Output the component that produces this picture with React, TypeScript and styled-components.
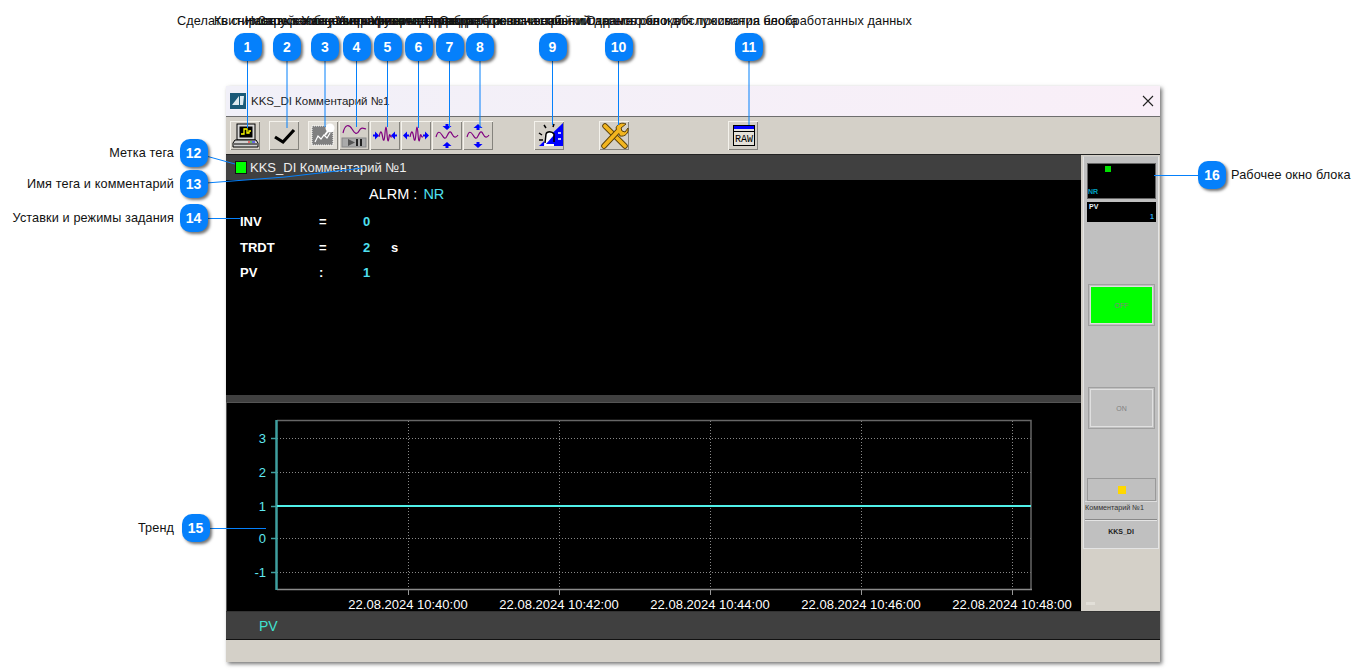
import React from "react";
import styled, { createGlobalStyle } from "styled-components";

const GlobalStyle = createGlobalStyle`
  html, body {
    margin: 0;
    padding: 0;
    background: #fff;
    overflow: hidden;
    font-family: "Liberation Sans", Arial, sans-serif;
  }
`;

const BLUE = "#0580fb";
const PURPLE = "#800080";
const ARROW = "#0000ff";

const TOP_NOTES = [
  { n: 1, x: 247.5, to: 128, text: "Сделать снимок экрана" },
  { n: 2, x: 287, to: 128, text: "Квитировать сообщение" },
  { n: 3, x: 325, to: 127, text: "Настройка шкалы графика" },
  { n: 4, x: 356.5, to: 127, text: "Запуск и пауза прокрутки тренда" },
  { n: 5, x: 387.5, to: 127, text: "Уменьшить интервал тренда" },
  { n: 6, x: 418.5, to: 128, text: "Увеличить интервал тренда" },
  { n: 7, x: 449.5, to: 128, text: "Уменьшить масштаб по оси значений" },
  { n: 8, x: 480, to: 128, text: "Увеличить масштаб по оси значений" },
  { n: 9, x: 552.5, to: 125, text: "Просмотр тревог и событий данного блока" },
  { n: 10, x: 618.5, to: 125, text: "Открыть окно настройки параметров и обслуживания блока" },
  { n: 11, x: 749, to: 125, text: "Открыть окно для просмотра необработанных данных" },
];

const SIDE_NOTES = [
  { n: 12, y: 153, x: 193.5, text: "Метка тега" },
  { n: 13, y: 184, x: 193.5, text: "Имя тега и комментарий" },
  { n: 14, y: 218, x: 193.5, text: "Уставки и режимы задания" },
  { n: 15, y: 528, x: 195.5, text: "Тренд" },
];

const SETPOINTS = [
  { name: "INV", sign: "=", value: "0", unit: "" },
  { name: "TRDT", sign: "=", value: "2", unit: "s" },
  { name: "PV", sign: ":", value: "1", unit: "" },
];

const RawText = styled.text`
  font-family: "Liberation Mono", monospace;
  font-size: 10px;
  fill: #000;
`;

const Wave = ({ d }: { d: string }) => <path d={d} fill="none" stroke={PURPLE} strokeWidth="1.2" />;
const Tri = ({ d }: { d: string }) => <path d={d} fill={ARROW} />;

const WIDE_WAVE = "M9 16c1 -5 2 -7 3 -3s1 7 2 6 1 -13 2 -13 1 14 2 14 1 -8 2 -6 .5 2 2 2";
const SMALL_WAVE = "M4 16c2 -7 4 -5 6 -2s3 5 5 1 3 -6 5 -2 4 4 6 1";

const Icons: Record<string, React.ReactNode> = {
  computer: (
    <>
      <rect x="7" y="3" width="18" height="16" fill="#d8d8d8" stroke="#000" />
      <rect x="9.500" y="5.500" width="13" height="11" fill="#000" />
      <path d="M11 13h3v-5h3v4h2v-2h2" fill="none" stroke="#ff0" strokeWidth="1.300" />
      <path d="M5 19h21l2 3v4H3v-4z" fill="#d0d0d0" stroke="#000" />
      <path d="M4 23h23" stroke="#000" />
      <path d="M18 21h2" stroke="#f00" />
      <path d="M20 21h2" stroke="#0a0" />
      <path d="M22 21h3" stroke="#00f" />
    </>
  ),
  check: <path d="M6 16l8 5L25 9" fill="none" stroke="#000" strokeWidth="3.200" />,
  chart: (
    <>
      <rect x="4" y="5" width="21" height="19" fill="#808080" stroke="#fff" strokeDasharray="1 1" />
      <path d="M7 21l3 -6 3 3 3 -4 3 3 3 -5" fill="none" stroke="#fff" strokeWidth="1.200" />
      <circle cx="22" cy="7" r="4.500" fill="#fff" />
      <path d="M17 14l3 -4" stroke="#fff" strokeWidth="2" />
    </>
  ),
  playPause: (
    <>
      <Wave d="M4 12c2 -9 6 -9 9 -4s5 6 7 2 4 -3 7 -2" />
      <rect x="3" y="17" width="24" height="9" fill="#aaa" stroke="#888" />
      <path d="M9 18l7 3.500 -7 3.500z" fill="#555" />
      <rect x="17" y="18" width="2" height="7" fill="#222" />
      <rect x="21" y="18" width="2" height="7" fill="#222" />
    </>
  ),
  zoomIn: (
    <>
      <Wave d={WIDE_WAVE} />
      <Tri d="M3 13.500h2v-3l4 4 -4 4v-3H3z" />
      <Tri d="M27 13.500h-2v-3l-4 4 4 4v-3h2z" />
    </>
  ),
  zoomOut: (
    <>
      <Wave d={WIDE_WAVE} />
      <Tri d="M8 13.500H6v-3l-4 4 4 4v-3h2z" />
      <Tri d="M22 13.500h2v-3l4 4 -4 4v-3h-2z" />
    </>
  ),
  squeeze: (
    <>
      <Wave d={SMALL_WAVE} />
      <Tri d="M13.500 3h3v2h3l-4.500 4 -4.500 -4h3z" />
      <Tri d="M13.500 27h3v-2h3l-4.500 -4 -4.500 4h3z" />
    </>
  ),
  stretch: (
    <>
      <Wave d={SMALL_WAVE} />
      <Tri d="M13.500 9h3V7h3L15 3 10.500 7h3z" />
      <Tri d="M13.500 21h3v2h3L15 27l-4.500 -4h3z" />
    </>
  ),
  alarm: (
    <>
      <path d="M29 2v23H5z" fill={ARROW} />
      <path d="M11 12h9v13h-10z" fill="#fff" />
      <path d="M20 14v9h-8z" fill={ARROW} />
      <path d="M11 22l1 -9c1 -3 6 -3 8 0v8" fill="none" stroke="#000" strokeWidth="1.500" />
      <path d="M5 12l3 2M5 19h4M10 4l2 3M20 3l-1 3" stroke="#000" strokeWidth="1.500" />
      <path d="M24 12h3M24 18h3" stroke="#fff" strokeWidth="1.500" />
    </>
  ),
  tools: (
    <>
      <path d="M6 5l20 20" stroke="#5a4008" strokeWidth="5.500" strokeLinecap="round" />
      <path d="M6 5l20 20" stroke="#f2b51f" strokeWidth="3.800" strokeLinecap="round" />
      <path d="M5 25L20 9" stroke="#5a4008" strokeWidth="5.500" strokeLinecap="round" />
      <path
        d="M17 7c1 -4 6 -6 10 -4l-5 4 1 3 3 1 3 -4c1 5 -3 9 -8 8z"
        fill="#f2b51f"
        stroke="#5a4008"
      />
      <path d="M5 25L20 9" stroke="#f2b51f" strokeWidth="3.800" strokeLinecap="round" />
    </>
  ),
  raw: (
    <>
      <rect x="5.500" y="4.500" width="21" height="20" fill="#e4e1da" stroke="#000" />
      <rect x="6" y="5" width="20" height="3" fill={ARROW} />
      <path d="M5 10.500h21" stroke="#000" />
      <RawText x="16" y="21" textAnchor="middle" textLength="18" lengthAdjust="spacingAndGlyphs">
        RAW
      </RawText>
    </>
  ),
};

const TOOLS = [
  { icon: "computer", gap: 0 },
  { icon: "check", gap: 9 },
  { icon: "chart", gap: 9, lit: true },
  { icon: "playPause", gap: 1 },
  { icon: "zoomIn", gap: 1 },
  { icon: "zoomOut", gap: 1 },
  { icon: "squeeze", gap: 1 },
  { icon: "stretch", gap: 1 },
  { icon: "alarm", gap: 41 },
  { icon: "tools", gap: 35 },
  { icon: "raw", gap: 99 },
];

const GRID_X = [408, 559, 710, 861, 1012];
const TIMES = ["10:40:00", "10:42:00", "10:44:00", "10:46:00", "10:48:00"];
const GRID_Y = [
  { y: 438, label: "3" },
  { y: 472, label: "2" },
  { y: 506, label: "1" },
  { y: 538, label: "0" },
  { y: 572, label: "-1" },
];

// chart coordinates are the page ones minus the origin of the svg
const OX = 227;
const OY = 403;

function Trend() {
  return (
    <TrendChart width={854} height={208} viewBox="0 0 854 208">
      <g transform={`translate(${-OX} ${-OY})`}>
        {GRID_Y.map((g) => (
          <g key={g.y}>
            <path d={`M277 ${g.y}.5H1031`} stroke="#888" strokeDasharray="1 2" />
            <path d={`M271 ${g.y}.5H277`} stroke="#3f9f9f" strokeWidth="1.500" />
            <AxisText x={266} y={g.y + 5} textAnchor="end">
              {g.label}
            </AxisText>
          </g>
        ))}
        {GRID_X.map((x, i) => (
          <g key={x}>
            <path d={`M${x}.5 421V589`} stroke="#888" strokeDasharray="1 2" />
            <path d={`M${x}.5 589V595`} stroke="#999" />
            <TimeText x={x} y={609} textAnchor="middle">
              22.08.2024 {TIMES[i]}
            </TimeText>
          </g>
        ))}
        <path d="M277 420.500H1031V590" fill="none" stroke="#666" strokeWidth="1.500" />
        <path d="M277 589.500H1032" stroke="#8a8a8a" strokeWidth="1.500" />
        <path d="M276.500 420V590" stroke="#3f9f9f" strokeWidth="2.500" />
        <path d="M277 506H1031" stroke="#50f0e8" strokeWidth="1.800" />
      </g>
    </TrendChart>
  );
}

export default function App() {
  return (
    <>
      <GlobalStyle />
      <Page>
        <Window>
          <TitleBar>
            <AppLogo viewBox="0 0 16 16">
              <rect width="16" height="16" fill="#1b5a78" />
              <path d="M2 12L9 3v9zM10 3h4l-1 9h-3z" fill="#dfeaf0" />
            </AppLogo>
            <WindowTitle>KKS_DI Комментарий №1</WindowTitle>
            <CloseIcon viewBox="0 0 12 12">
              <path d="M1 1l10 10M11 1L1 11" stroke="#222" strokeWidth="1.100" />
            </CloseIcon>
          </TitleBar>

          <Toolbar>
            {TOOLS.map((t) => (
              <ToolButton key={t.icon} $gap={t.gap} $lit={t.lit}>
                <svg width="30" height="29" viewBox="0 0 30 29">
                  {Icons[t.icon]}
                </svg>
              </ToolButton>
            ))}
          </Toolbar>

          <Body>
            <MainColumn>
              <TagHeader>
                <TagMark />
                <TagName>KKS_DI Комментарий №1</TagName>
              </TagHeader>
              <DataPanel>
                <AlarmLine>
                  ALRM : <Cyan>NR</Cyan>
                </AlarmLine>
                {SETPOINTS.map((s) => (
                  <SetpointRow key={s.name}>
                    <span>{s.name}</span>
                    <span>{s.sign}</span>
                    <SetpointValue>{s.value}</SetpointValue>
                    <span>{s.unit}</span>
                  </SetpointRow>
                ))}
              </DataPanel>
              <Splitter />
              <TrendBox>
                <Trend />
              </TrendBox>
            </MainColumn>

            <SideColumn>
              <BlockPanel>
                <StatusScreen>
                  <StatusDot />
                  <StatusText>NR</StatusText>
                </StatusScreen>
                <ValueScreen>
                  <ValueName>PV</ValueName>
                  <ValueNumber>1</ValueNumber>
                </ValueScreen>
                <StateButton $on $top={64}>
                  OFF
                </StateButton>
                <StateButton $top={65}>ON</StateButton>
                <LampBox>
                  <Lamp />
                </LampBox>
                <CommentLine>Комментарий №1</CommentLine>
                <BlockName>KKS_DI</BlockName>
              </BlockPanel>
              <SideRest>
                <SideGrip />
              </SideRest>
            </SideColumn>
          </Body>

          <LegendBar>
            <LegendName>PV</LegendName>
          </LegendBar>
          <StatusBar />
        </Window>

        <Leaders width={1366} height={671}>
          {TOP_NOTES.map((n) => (
            <path key={n.n} d={`M${n.x} 60V${n.to}`} stroke={BLUE} strokeWidth="1" />
          ))}
          <path d="M206 156L235 164" stroke={BLUE} />
          <path d="M206 183L285 177L363 168" stroke={BLUE} fill="none" />
          <path d="M206 218.500H240" stroke={BLUE} />
          <path d="M208 528.500H266" stroke={BLUE} />
          <path d="M1154 175.500H1200" stroke={BLUE} />
        </Leaders>

        {TOP_NOTES.map((n) => (
          <React.Fragment key={n.n}>
            <TopLabel $x={n.x}>{n.text}</TopLabel>
            <Badge $x={n.x} $y={47}>
              {n.n}
            </Badge>
          </React.Fragment>
        ))}

        {SIDE_NOTES.map((n) => (
          <React.Fragment key={n.n}>
            <SideLabel $y={n.y}>{n.text}</SideLabel>
            <Badge $x={n.x} $y={n.y}>
              {n.n}
            </Badge>
          </React.Fragment>
        ))}

        <Badge $x={1212} $y={175}>
          16
        </Badge>
        <RightLabel>Рабочее окно блока</RightLabel>
      </Page>
    </>
  );
}

const Page = styled.div`
  position: relative;
  width: 1366px;
  height: 671px;
  padding: 86px 0 0 226px;
  box-sizing: border-box;
  overflow: hidden;
`;

const Window = styled.div`
  width: 934px;
  height: 576px;
  display: flex;
  flex-direction: column;
  background: #d4d0c8;
  box-shadow: 2px 2px 4px rgba(0, 0, 0, 0.55);
`;

const TitleBar = styled.div`
  height: 30px;
  flex: none;
  display: flex;
  align-items: center;
  padding: 0 6px 0 4px;
  background: linear-gradient(90deg, #f1f0f8, #f9eff8);
  border-bottom: 1px solid #6e6e6e;
`;

const AppLogo = styled.svg`
  width: 16px;
  height: 16px;
`;

const WindowTitle = styled.div`
  margin-left: 5px;
  flex: 1;
  font-size: 11.500px;
  color: #222;
`;

const CloseIcon = styled.svg`
  width: 12px;
  height: 12px;
`;

const Toolbar = styled.div`
  height: 38px;
  flex: none;
  display: flex;
  align-items: flex-start;
  padding: 4px 0 0 4px;
  box-sizing: border-box;
  background: #d4d0c8;
  border-bottom: 1px solid #222;
`;

const ToolButton = styled.div<{ $gap: number; $lit?: boolean }>`
  width: 30px;
  height: 29px;
  margin-left: ${(p) => p.$gap}px;
  background: ${(p) => (p.$lit ? "#e2dfd8" : "#d4d0c8")};
  box-shadow: inset 1px 1px 0 #f4f2ec, inset -1px -1px 0 #85837d;
  svg {
    display: block;
  }
`;

const Body = styled.div`
  height: 456px;
  flex: none;
  display: flex;
`;

const MainColumn = styled.div`
  width: 855px;
  display: flex;
  flex-direction: column;
  background: #000;
`;

const TagHeader = styled.div`
  height: 25px;
  display: flex;
  align-items: center;
  padding-left: 9px;
  background: #404040;
`;

const TagMark = styled.div`
  width: 10px;
  height: 11px;
  background: #00ff00;
  border: 1px solid #111;
`;

const TagName = styled.div`
  margin-left: 3px;
  font-size: 13px;
  color: #eee;
`;

const DataPanel = styled.div`
  height: 215px;
  box-sizing: border-box;
  padding-top: 5px;
  color: #fff;
`;

const AlarmLine = styled.div`
  padding-left: 143px;
  margin-bottom: 6px;
  font-size: 14.500px;
  line-height: 18px;
`;

const Cyan = styled.span`
  color: #4fe0f0;
  margin-left: 2px;
`;

const SetpointRow = styled.div`
  display: grid;
  grid-template-columns: 79px 44px 28px 20px;
  padding-left: 14px;
  height: 25.5px;
  align-items: center;
  font-size: 13px;
  font-weight: 700;
`;

const SetpointValue = styled.span`
  color: #4fe0f0;
`;

const Splitter = styled.div`
  height: 7px;
  background: #404040;
`;

const TrendBox = styled.div`
  flex: 1;
  background: #000;
  border-left: 1px solid #555;
  border-top: 1px solid #555;
`;

const TrendChart = styled.svg`
  display: block;
`;

const AxisText = styled.text`
  font-size: 13px;
  fill: #5fe8f0;
`;

const TimeText = styled.text`
  font-size: 13px;
  fill: #fff;
`;

const SideColumn = styled.div`
  flex: 1;
  display: flex;
  flex-direction: column;
  padding-left: 1px;
`;

const BlockPanel = styled.div`
  height: 393px;
  margin: 1px 1px 0 1px;
  padding: 6px 2px 0 3px;
  box-sizing: border-box;
  display: flex;
  flex-direction: column;
  background: #c0c0c0;
  border: 1px solid #e4e4e4;
  border-top-color: #c8c8c8;
`;

const StatusScreen = styled.div`
  position: relative;
  height: 36px;
  background: #000;
  border: 1px solid #666;
  box-sizing: border-box;
`;

const StatusDot = styled.div`
  position: absolute;
  left: 17px;
  top: 2px;
  width: 6px;
  height: 6px;
  background: #00e000;
`;

const StatusText = styled.div`
  position: absolute;
  left: 0;
  bottom: 3px;
  font-size: 7px;
  font-weight: 700;
  color: #00a0c0;
`;

const ValueScreen = styled.div`
  height: 20px;
  margin-top: 3px;
  padding: 1px 2px;
  box-sizing: border-box;
  display: flex;
  flex-direction: column;
  background: #000;
  font-size: 7px;
  font-weight: 700;
  line-height: 7px;
`;

const ValueName = styled.div`
  color: #e8f4ff;
`;

const ValueNumber = styled.div`
  margin-top: 3px;
  text-align: right;
  color: #30b0f0;
`;

const StateButton = styled.div<{ $on?: boolean; $top: number }>`
  height: 36px;
  margin: ${(p) => p.$top}px 3px 0 3px;
  display: flex;
  align-items: center;
  justify-content: center;
  font-size: 7px;
  color: #808080;
  background: ${(p) => (p.$on ? "#00ff00" : "#c0c0c0")};
  border: 1px solid #e0e0e0;
  outline: 1px solid #a0a0a0;
  outline-offset: 1px;
`;

const LampBox = styled.div`
  height: 21px;
  margin-top: 51px;
  display: flex;
  align-items: center;
  justify-content: center;
  border: 1px solid #999;
`;

const Lamp = styled.div`
  width: 8px;
  height: 8px;
  background: #ffd800;
`;

const CommentLine = styled.div`
  height: 19px;
  margin: 0 -1px 0 -2px;
  padding-top: 1px;
  box-sizing: border-box;
  font-size: 7.200px;
  color: #333;
  border-top: 1px solid #dedede;
  border-bottom: 1px solid #888;
`;

const BlockName = styled.div`
  margin: 0 -1px 0 -2px;
  height: 21px;
  display: flex;
  align-items: center;
  justify-content: center;
  font-size: 7px;
  font-weight: 700;
  color: #222;
  border-top: 1px solid #e4e4e4;
`;

const SideRest = styled.div`
  flex: 1;
  display: flex;
  align-items: flex-end;
  padding: 0 0 6px 4px;
`;

const SideGrip = styled.div`
  width: 9px;
  height: 3px;
  background: #e2dfd8;
`;

const LegendBar = styled.div`
  height: 27px;
  flex: none;
  display: flex;
  align-items: center;
  padding-left: 33px;
  background: #404040;
  border-top: 1px solid #333;
  border-bottom: 1px solid #111;
`;

const LegendName = styled.div`
  font-size: 14px;
  color: #40e0d0;
`;

const StatusBar = styled.div`
  flex: 1;
  background: #d4d0c8;
`;

const Leaders = styled.svg`
  position: absolute;
  left: 0;
  top: 0;
  pointer-events: none;
`;

const Badge = styled.div<{ $x: number; $y: number }>`
  position: absolute;
  left: ${(p) => p.$x - 14}px;
  top: ${(p) => p.$y - 14}px;
  width: 28px;
  height: 28px;
  display: flex;
  align-items: center;
  justify-content: center;
  border-radius: 10px;
  background: ${BLUE};
  box-shadow: 2px 2px 3px rgba(0, 0, 0, 0.55);
  color: #fff;
  font-size: 14px;
  font-weight: 700;
`;

const TopLabel = styled.div<{ $x: number }>`
  position: absolute;
  left: ${(p) => p.$x}px;
  top: 13px;
  transform: translateX(-50%);
  white-space: nowrap;
  font-size: 12.700px;
  letter-spacing: 0.100px;
  line-height: 16px;
  color: #111;
`;

const SideLabel = styled.div<{ $y: number }>`
  position: absolute;
  right: 1192px;
  top: ${(p) => p.$y - 8}px;
  white-space: nowrap;
  font-size: 12.700px;
  letter-spacing: 0.100px;
  line-height: 16px;
  color: #111;
`;

const RightLabel = styled.div`
  position: absolute;
  left: 1231px;
  top: 167px;
  white-space: nowrap;
  font-size: 12.700px;
  letter-spacing: 0.100px;
  line-height: 16px;
  color: #111;
`;
